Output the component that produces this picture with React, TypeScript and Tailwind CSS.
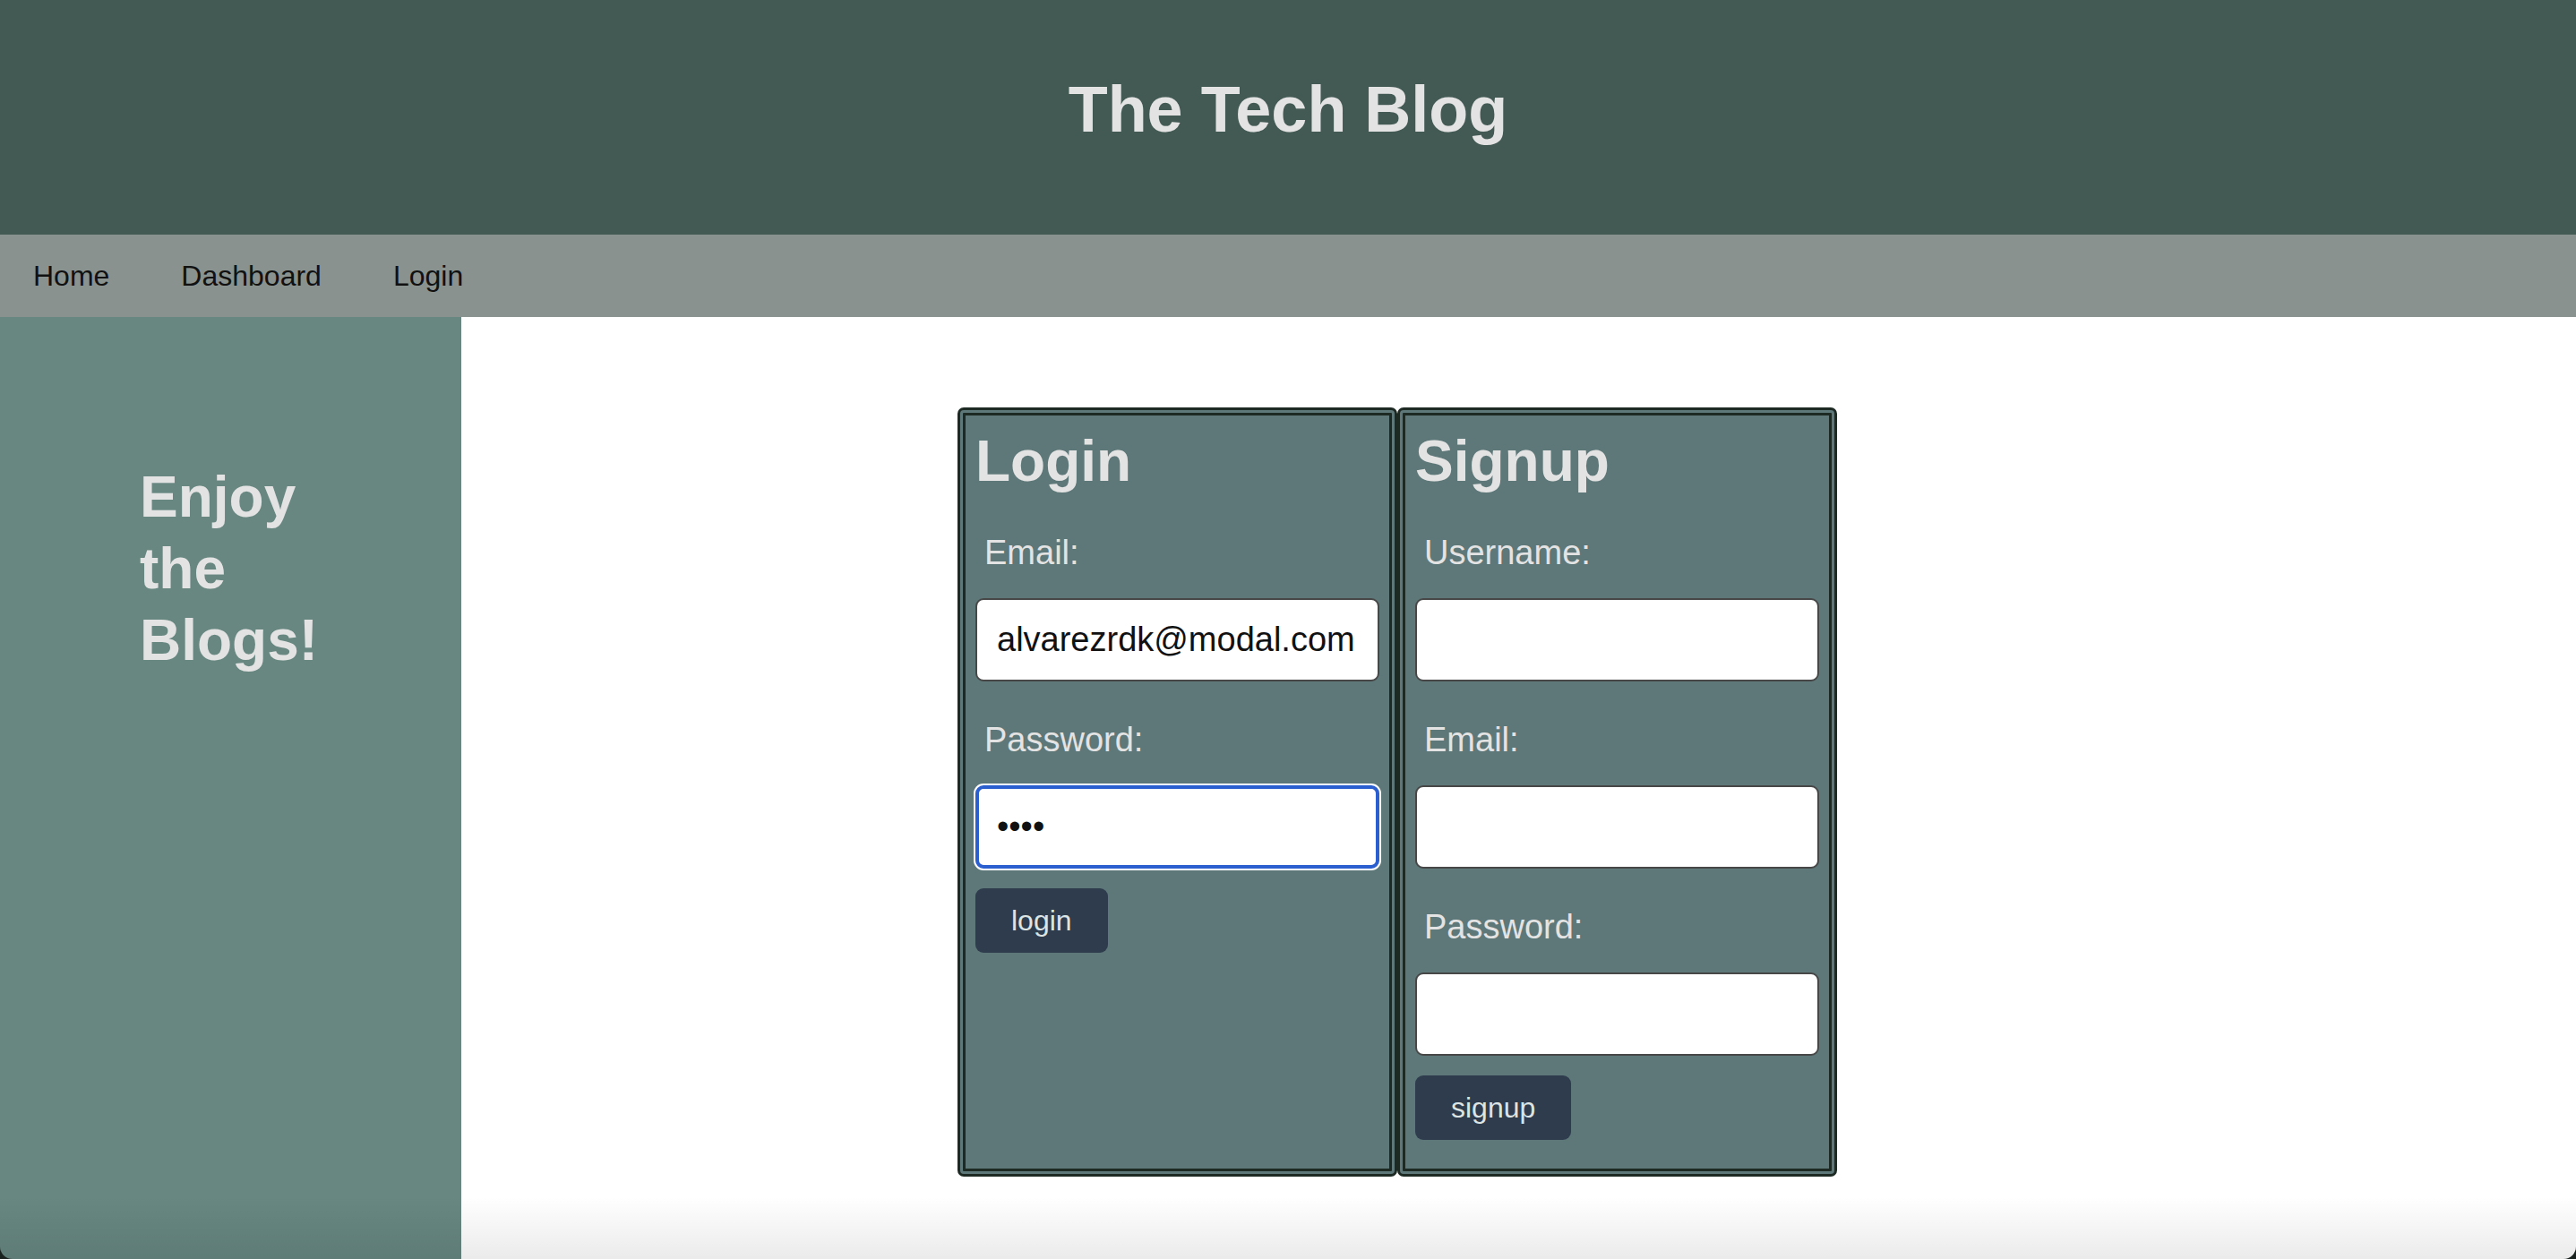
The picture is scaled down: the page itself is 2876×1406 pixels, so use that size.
import { useState } from "react";

const Field = ({
  label,
  type = "text",
  value,
  focused = false,
}: {
  label: string;
  type?: string;
  value?: string;
  focused?: boolean;
}) => {
  const [text, setText] = useState(value ?? "");
  return (
    <div className="flex flex-col">
      <label className="ml-[10px] mt-[43px] mb-[29px] text-[38px] leading-[44px] text-[#e3e3e3]">
        {label}
      </label>
      <input
        type={type}
        value={text}
        onChange={(e) => setText(e.target.value)}
        autoFocus={focused}
        className={
          focused
            ? "h-[93px] w-full rounded-[9px] border-[4px] border-[#2b5fd0] bg-white pl-[20px] text-[38px] text-[#111] shadow-[0_0_0_2px_#ffffff] outline-none"
            : "h-[93px] w-full rounded-[9px] border-2 border-[#474747] bg-white pl-[22px] text-[38px] text-[#111] outline-none"
        }
      />
    </div>
  );
};

const Card = ({
  title,
  children,
}: {
  title: string;
  children: React.ReactNode;
}) => (
  <div className="w-[491px] rounded-[7px] border-[9px] border-double border-[#1d2a24] bg-[#5e7778] px-[11px] pt-[14px] pb-[32px]">
    <h2 className="text-[64px] font-bold leading-[74px] text-[#e3e3e3]">
      {title}
    </h2>
    {children}
  </div>
);

const Button = ({ children }: { children: React.ReactNode }) => (
  <button className="mt-[22px] h-[72px] rounded-[9px] bg-[#2e3c4e] px-[40px] text-[32px] text-[#dce4e4]">
    {children}
  </button>
);

export default function App() {
  return (
    <div className="min-h-screen bg-[#1b2320] font-['Liberation_Sans',Arial,sans-serif]">
      <div className="relative flex min-h-screen flex-col overflow-hidden rounded-b-[14px]">
        <header className="h-[262px] bg-[#435a54] pt-[81px] text-center">
          <h1 className="text-[72px] font-bold leading-[83px] text-[#e3e3e3]">
            The Tech Blog
          </h1>
        </header>

        <nav className="flex h-[92px] items-center gap-[80px] bg-[#89928e] pl-[37px] text-[32px] text-[#111]">
          <a href="#">Home</a>
          <a href="#">Dashboard</a>
          <a href="#">Login</a>
        </nav>

        <div className="flex flex-1">
          <aside className="w-[515px] bg-[#678780] pt-[161px] pl-[156px]">
            <h2 className="w-[220px] text-[64px] font-bold leading-[80px] text-[#e3e3e3]">
              Enjoy the Blogs!
            </h2>
          </aside>

          <main className="flex-1 bg-white pt-[101px] pl-[554px]">
            <div className="flex">
              <Card title="Login">
                <Field label="Email:" value="alvarezrdk@modal.com" />
                <Field label="Password:" type="password" value="1234" focused />
                <Button>login</Button>
              </Card>
              <Card title="Signup">
                <Field label="Username:" />
                <Field label="Email:" />
                <Field label="Password:" type="password" />
                <Button>signup</Button>
              </Card>
            </div>
          </main>
        </div>

        <div className="pointer-events-none absolute inset-x-0 bottom-0 h-[70px] bg-linear-to-b from-transparent to-black/[0.08]" />
      </div>
    </div>
  );
}
